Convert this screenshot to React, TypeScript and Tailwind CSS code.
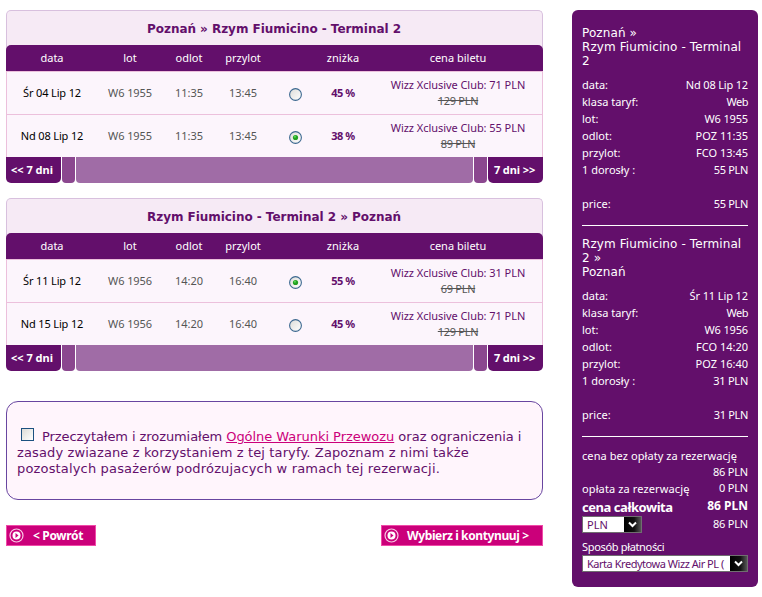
import React from "react";

type Flight = {
  date: string;
  no: string;
  dep: string;
  arr: string;
  selected: boolean;
  discount: string;
  price: string;
  old: string;
};

const COLS =
  "grid grid-cols-[78px_78px_40px_68px_36px_60px_170px] items-center justify-items-center";

function Radio({ checked }: { checked: boolean }) {
  return (
    <svg width="13" height="13" viewBox="0 0 13 13" className="block">
      <defs>
        <linearGradient id="face" x1="0" y1="0" x2="1" y2="1">
          <stop offset="0" stopColor="#dcdcd8" />
          <stop offset="1" stopColor="#ffffff" />
        </linearGradient>
      </defs>
      <circle cx="6.5" cy="6.5" r="5.9" fill="url(#face)" stroke="#3c6890" strokeWidth="1.1" />
      {checked && <circle cx="6.5" cy="6.5" r="2.6" fill="#21a121" />}
      {checked && <circle cx="5.9" cy="5.7" r="1.1" fill="#55d551" />}
    </svg>
  );
}

function FlightTable({ title, rows }: { title: string; rows: Flight[] }) {
  return (
    <section className="h-[173px] w-[537px]">
      <div className="h-[61px] rounded-t-[5px] border border-b-0 border-[#d8c0de] bg-[#f6eaf5]">
        <h2 className="flex h-[34px] items-center justify-center pt-[2px] pr-[1px] text-[12px] font-bold tracking-[-0.04px] text-[#630f6b] [font-family:'DejaVu_Sans',sans-serif]">
          {title}
        </h2>
        <div className={`${COLS} -mx-px h-[26px] rounded-t-[5px] bg-[#630f6b] pl-[7px] text-white`}>
          <span>data</span>
          <span>lot</span>
          <span>odlot</span>
          <span>przylot</span>
          <span />
          <span className="tracking-[0.1px]">zniżka</span>
          <span>cena biletu</span>
        </div>
      </div>
      <div className="border-x border-[#ecc0dc] bg-[#fcf5fc]">
        {rows.map((f) => (
          <div key={f.date} className={`${COLS} -mr-px h-[43px] border-t border-[#ecc0dc] pl-[6px] text-[#555]`}>
            <span className="tracking-[-0.15px] text-black">{f.date}</span>
            <span className="tracking-[-0.1px]">{f.no}</span>
            <span>{f.dep}</span>
            <span>{f.arr}</span>
            <span className="pt-[3px]">
              <Radio checked={f.selected} />
            </span>
            <span className="font-bold tracking-[-0.5px] text-[#630f6b]">{f.discount}</span>
            <span className="flex flex-col items-center leading-[16px]">
              <span className="tracking-[-0.05px] text-[#630f6b]">{f.price}</span>
              <span className="tracking-[-0.3px] line-through">{f.old}</span>
            </span>
          </div>
        ))}
      </div>
      <div className="flex h-[26px] gap-px font-bold text-white">
        <span className="flex w-[55px] items-center justify-center rounded-b-[5px] bg-[#630f6b] pr-[3px]">&lt;&lt; 7 dni</span>
        <span className="w-[13px] rounded-b-[4px] bg-[#8b478f]" />
        <span className="flex-1 rounded-b-[4px] bg-[#a06ca6]" />
        <span className="w-[13px] rounded-b-[4px] bg-[#8b478f]" />
        <span className="flex w-[55px] items-center justify-center rounded-b-[5px] bg-[#630f6b] pr-[2px] tracking-[-0.1px]">7 dni &gt;&gt;</span>
      </div>
    </section>
  );
}

function ButtonIcon() {
  return (
    <svg width="15" height="15" viewBox="0 0 15 15" className="block">
      <circle cx="7.5" cy="7.5" r="6.5" fill="none" stroke="#f9cbe6" strokeWidth="1.2" />
      <circle cx="7.5" cy="7.5" r="4" fill="#fff" />
      <path d="M6.5 5v5L9.5 7.5z" fill="#cb007a" />
    </svg>
  );
}

function Select({ value, className }: { value: string; className: string }) {
  return (
    <div className={`flex h-[17px] items-center border border-[#706e70] bg-white text-[#630f6b] ${className}`}>
      <span className="flex-1 pl-[4px] whitespace-nowrap">{value}</span>
      <svg width="17" height="15" viewBox="0 0 17 15" className="block shrink-0">
        <defs>
          <linearGradient id="arrow" x1="0" x2="1">
            <stop offset="0" stopColor="#000" />
            <stop offset=".6" stopColor="#111" />
            <stop offset="1" stopColor="#555" />
          </linearGradient>
        </defs>
        <rect width="17" height="15" fill="url(#arrow)" />
        <path d="M5 5.5l3.5 3.5L12 5.5" fill="none" stroke="#fff" strokeWidth="2" />
      </svg>
    </div>
  );
}

function Line({ label, value, spacing }: { label: string; value: string; spacing: string }) {
  return (
    <div className="flex h-[17px] items-center justify-between">
      <span>{label}</span>
      <span className={spacing}>{value}</span>
    </div>
  );
}

function Leg({ title, lines, price }: { title: string[]; lines: [string, string, string][]; price: string }) {
  return (
    <div className="h-[201px] border-b border-white">
      <div className="mb-[9px] pt-[1px] text-[12px] leading-[14px] tracking-[0.1px] [font-family:'DejaVu_Sans',sans-serif]">
        {title.map((t) => (
          <div key={t}>{t}</div>
        ))}
      </div>
      {lines.map(([l, v, s]) => (
        <Line key={l} label={l} value={v} spacing={s} />
      ))}
      <div className="h-[17px]" />
      <Line label="price:" value={price} spacing="tracking-[-0.33px]" />
    </div>
  );
}

const outbound: Flight[] = [
  { date: "Śr 04 Lip 12", no: "W6 1955", dep: "11:35", arr: "13:45", selected: false, discount: "45 %", price: "Wizz Xclusive Club: 71 PLN", old: "129 PLN" },
  { date: "Nd 08 Lip 12", no: "W6 1955", dep: "11:35", arr: "13:45", selected: true, discount: "38 %", price: "Wizz Xclusive Club: 55 PLN", old: "89 PLN" },
];

const inbound: Flight[] = [
  { date: "Śr 11 Lip 12", no: "W6 1956", dep: "14:20", arr: "16:40", selected: true, discount: "55 %", price: "Wizz Xclusive Club: 31 PLN", old: "69 PLN" },
  { date: "Nd 15 Lip 12", no: "W6 1956", dep: "14:20", arr: "16:40", selected: false, discount: "45 %", price: "Wizz Xclusive Club: 71 PLN", old: "129 PLN" },
];

export default function App() {
  return (
    <div className="flex h-[597px] w-[762px] items-start gap-[29px] overflow-hidden bg-white pt-[10px] pl-[6px] text-[11px] whitespace-nowrap [font-family:'Noto_Sans',sans-serif]">
      <main className="w-[537px]">
        <FlightTable title="Poznań » Rzym Fiumicino - Terminal 2" rows={outbound} />
        <div className="h-[15px]" />
        <FlightTable title="Rzym Fiumicino - Terminal 2 » Poznań" rows={inbound} />

        <div className="mt-[30px] h-[99px] rounded-[12px] border border-[#6845a0] bg-[#fff5fc] pt-[27px] pl-[10px] text-[13px] leading-[16px] text-[#630f6b] [font-family:'DejaVu_Sans',sans-serif]">
          <div className="flex">
            <span className="mt-[-1px] mr-[8px] ml-[4px] h-[13px] w-[13px] border border-[#1c5180] bg-linear-to-br from-[#dcdcd7] to-white" />
            <span>
              <span className="tracking-[-0.08px]">Przeczytałem i zrozumiałem </span>
              <span className="tracking-[-0.04px] text-[#cb007a] underline">Ogólne Warunki Przewozu</span> oraz ograniczenia i
            </span>
          </div>
          <div className="tracking-[0.12px]">zasady zwiazane z korzystaniem z tej taryfy. Zapoznam z nimi także</div>
          <div className="tracking-[0.165px]">pozostalych pasażerów podrózujacych w ramach tej rezerwacji.</div>
        </div>

        <div className="mt-[25px] flex justify-between text-[12px] font-bold text-white">
          <button className="flex h-[21px] w-[90px] items-center border border-[#f04aa8] bg-[#cb007a] pl-[2px]">
            <ButtonIcon />
            <span className="ml-[9px] tracking-[-0.35px]">&lt; Powrót</span>
          </button>
          <button className="flex h-[21px] w-[162px] items-center border border-[#f04aa8] bg-[#cb007a] pl-[2px]">
            <ButtonIcon />
            <span className="ml-[8px] tracking-[-0.38px]">Wybierz i kontynuuj &gt;</span>
          </button>
        </div>
      </main>

      <aside className="h-[577px] w-[186px] rounded-[6px] bg-[#630f6b] px-[10px] pt-[15px] text-white">
        <Leg
          title={["Poznań »", "Rzym Fiumicino - Terminal", "2"]}
          lines={[
            ["data:", "Nd 08 Lip 12", "tracking-[-0.17px]"],
            ["klasa taryf:", "Web", "tracking-[-0.5px]"],
            ["lot:", "W6 1955", "tracking-[-0.15px]"],
            ["odlot:", "POZ 11:35", "tracking-normal"],
            ["przylot:", "FCO 13:45", "tracking-normal"],
            ["1 dorosły :", "55 PLN", "tracking-[-0.33px]"],
          ]}
          price="55 PLN"
        />
        <div className="h-[10px]" />
        <Leg
          title={["Rzym Fiumicino - Terminal", "2 »", "Poznań"]}
          lines={[
            ["data:", "Śr 11 Lip 12", "tracking-[-0.1px]"],
            ["klasa taryf:", "Web", "tracking-[-0.5px]"],
            ["lot:", "W6 1956", "tracking-[-0.15px]"],
            ["odlot:", "FCO 14:20", "tracking-normal"],
            ["przylot:", "POZ 16:40", "tracking-normal"],
            ["1 dorosły :", "31 PLN", "tracking-[-0.25px]"],
          ]}
          price="31 PLN"
        />
        <div className="mt-[11px] leading-[16px]">
          <div className="tracking-[0.08px]">cena bez opłaty za rezerwację</div>
          <div className="text-right tracking-[-0.2px]">86 PLN</div>
          <div className="flex justify-between">
            <span className="pt-px tracking-[0.12px]">opłata za rezerwację</span>
            <span className="tracking-[-0.2px]">0 PLN</span>
          </div>
          <div className="flex h-[19px] justify-between font-bold">
            <span className="pt-[2px] text-[13px] tracking-[-0.45px]">cena całkowita</span>
            <span className="pt-[1px] text-[12px]">86 PLN</span>
          </div>
          <div className="flex justify-between">
            <Select value="PLN" className="w-[60px]" />
            <span className="tracking-[-0.2px]">86 PLN</span>
          </div>
          <div className="mt-[6px] tracking-[-0.33px]">Sposób płatności</div>
          <Select value="Karta Kredytowa Wizz Air PL (" className="w-[166px] tracking-[-0.47px]" />
        </div>
      </aside>
    </div>
  );
}
